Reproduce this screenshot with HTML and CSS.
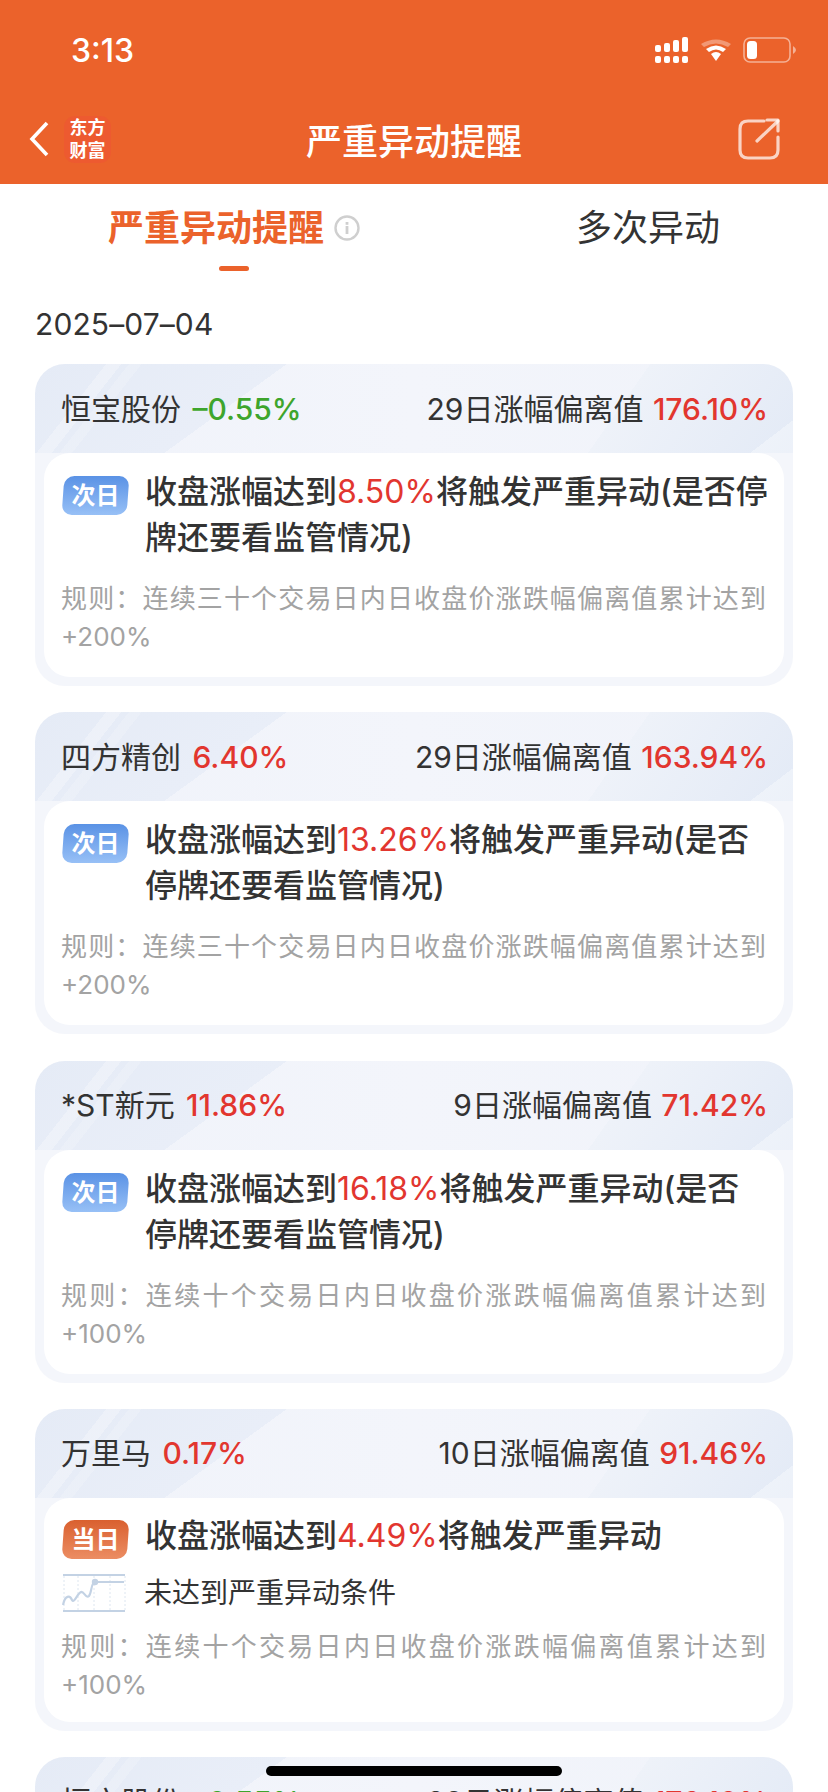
FILE: index.html
```html
<!DOCTYPE html>
<html>
<head>
	<meta charset="utf-8">
	<title>严重异动提醒</title>

	<link rel="stylesheet" href="styles.css">

</head>
<body>

	<header class="top">
		<div class="status">
			<span class="time">3:13</span>
			<div class="status-icons">
				<svg class="signal" width="34" height="26" viewBox="0 0 34 26" fill="#fff">
					<rect x="0" y="8" width="6" height="7" rx="2"/>
					<rect x="9" y="6" width="6" height="9" rx="2"/>
					<rect x="18" y="3" width="6" height="12" rx="2"/>
					<rect x="27" y="0" width="6" height="15" rx="2"/>
					<rect x="0" y="19" width="6" height="7" rx="2"/>
					<rect x="9" y="19" width="6" height="7" rx="2"/>
					<rect x="18" y="19" width="6" height="7" rx="2"/>
					<rect x="27" y="19" width="6" height="7" rx="2"/>
				</svg>
				<svg class="wifi" width="32" height="24" viewBox="0 0 32 24">
					<path d="M1 6 Q16 -3 31 6 L28 9 Q16 2 4 9 Z" fill="#fff" opacity="0.35"/>
					<path d="M6 11 Q16 4 26 11 L23 14 Q16 9 9 14 Z" fill="#fff"/>
					<path d="M11 16 Q16 12 21 16 L16 23 Z" fill="#fff"/>
				</svg>
				<svg class="battery" width="54" height="26" viewBox="0 0 54 26">
					<rect x="1" y="1" width="46" height="24" rx="6" fill="none" stroke="#fff" stroke-opacity="0.5" stroke-width="1.6"/>
					<rect x="4" y="4" width="10" height="18" rx="3.5" fill="#fff"/>
					<path d="M50 9 Q53 11 53 13 Q53 15 50 17 Z" fill="#fff" fill-opacity="0.5"/>
				</svg>
			</div>
		</div>
		<div class="nav">
			<div class="nav-left">
				<svg width="20" height="36" viewBox="0 0 20 36">
					<path d="M18 2 L3 18 L18 34" fill="none" stroke="#fff" stroke-width="3.6"/>
				</svg>
				<div class="logo">东方<br>财富</div>
			</div>
			<div class="nav-title">严重异动提醒</div>
			<svg class="share" width="42" height="42" viewBox="0 0 42 42" fill="none" stroke="#fff" stroke-opacity="0.72" stroke-width="3.2" stroke-linecap="round" stroke-linejoin="round">
				<path d="M26 3 H10 Q2 3 2 11 V32 Q2 40 10 40 H32 Q40 40 40 32 V19"/>
				<path d="M19 23 L40 3"/>
				<path d="M29 2 H40 V13"/>
			</svg>
		</div>
	</header>

	<nav class="tabs">
		<div class="tab tab-active">
			<span>严重异动提醒</span>
			<svg width="26" height="26" viewBox="0 0 26 26">
				<circle cx="13" cy="13" r="11.5" fill="none" stroke="#cfcfcf" stroke-width="2.4"/>
				<rect x="11.6" y="11" width="2.8" height="8" fill="#cfcfcf"/>
				<rect x="11.6" y="7" width="2.8" height="2.8" fill="#cfcfcf"/>
			</svg>
		</div>
		<div class="tab">多次异动</div>
	</nav>

	<div class="date">2025–07–04</div>

	<section class="card">
		<div class="card-head">
			<div><span class="name">恒宝股份</span> <span class="down">–0.55%</span></div>
			<div>29日涨幅偏离值 <span class="up">176.10%</span></div>
		</div>
		<div class="card-body">
			<div class="main">
				<span class="badge badge-next">次日</span>
				<p>收盘涨幅达到<em>8.50%</em>将触发严重异动(是否停牌还要看监管情况)</p>
			</div>
			<p class="rule">规则：连续三十个交易日内日收盘价涨跌幅偏离值累计达到+200%</p>
		</div>
	</section>

	<section class="card">
		<div class="card-head">
			<div><span class="name">四方精创</span> <span class="up">6.40%</span></div>
			<div>29日涨幅偏离值 <span class="up">163.94%</span></div>
		</div>
		<div class="card-body">
			<div class="main">
				<span class="badge badge-next">次日</span>
				<p>收盘涨幅达到<em>13.26%</em>将触发严重异动(是否停牌还要看监管情况)</p>
			</div>
			<p class="rule">规则：连续三十个交易日内日收盘价涨跌幅偏离值累计达到+200%</p>
		</div>
	</section>

	<section class="card">
		<div class="card-head">
			<div><span class="name">*ST新元</span> <span class="up">11.86%</span></div>
			<div>9日涨幅偏离值 <span class="up">71.42%</span></div>
		</div>
		<div class="card-body">
			<div class="main">
				<span class="badge badge-next">次日</span>
				<p>收盘涨幅达到<em>16.18%</em>将触发严重异动(是否停牌还要看监管情况)</p>
			</div>
			<p class="rule">规则：连续十个交易日内日收盘价涨跌幅偏离值累计达到+100%</p>
		</div>
	</section>

	<section class="card">
		<div class="card-head">
			<div><span class="name">万里马</span> <span class="up">0.17%</span></div>
			<div>10日涨幅偏离值 <span class="up">91.46%</span></div>
		</div>
		<div class="card-body card-body-today">
			<div class="main">
				<span class="badge badge-today">当日</span>
				<p>收盘涨幅达到<em>4.49%</em>将触发严重异动</p>
			</div>
			<div class="cond">
				<svg width="64" height="40" viewBox="0 0 64 40" fill="none">
					<path d="M1 2 H63 M1 38 H63" stroke="#c3d2e4" stroke-width="2.2"/>
					<path d="M16 3 V37 M32 3 V37 M48 3 V37 M63 3 V37 M2 3 V37" stroke="#dde6f0" stroke-width="1" stroke-dasharray="2 2"/>
					<path d="M1 32 C3 22 8 22 10 27 C12 31 15 21 19 19 C22 18 24 26 27 23 C30 19 29 9 33 9 H62" stroke="#c3d2e4" stroke-width="2.2"/>
					<circle cx="33" cy="9" r="3.2" fill="#c3d2e4"/>
				</svg>
				<p>未达到严重异动条件</p>
			</div>
			<p class="rule">规则：连续十个交易日内日收盘价涨跌幅偏离值累计达到+100%</p>
		</div>
	</section>

	<section class="card">
		<div class="card-head">
			<div><span class="name">恒宝股份</span> <span class="down">–0.55%</span></div>
			<div>29日涨幅偏离值 <span class="up">176.10%</span></div>
		</div>
	</section>

	<div class="home-bar"></div>

</body>
</html>
```

FILE: styles.css
```css
html, body {
	margin: 0;
	padding: 0;
}

body {
	position: relative;
	width: 828px;
	height: 1792px;
	overflow: hidden;
	background: #fff;
	color: #333;
	font-family: Inter, "Noto Sans CJK SC", sans-serif;
}

p {
	margin: 0;
}

.top {
	height: 184px;
	background: #eb622b;
	color: #fff;
}

.status {
	display: flex;
	justify-content: space-between;
	align-items: center;
	height: 100px;
	padding: 0 31px 0 71px;
}

.time {
	font-size: 32px;
	font-weight: 500;
}

.status-icons {
	display: flex;
	align-items: center;
	gap: 11px;
}

.nav {
	display: grid;
	grid-template-columns: 1fr auto 1fr;
	align-items: center;
	height: 84px;
	padding: 0 29px 6px;
	box-sizing: border-box;
}

.nav-left {
	display: flex;
	align-items: center;
	gap: 15px;
}

.share {
	justify-self: end;
	margin-right: 19px;
}

.logo {
	width: 47px;
	height: 47px;
	border-radius: 11px;
	background: #ed5a30;
	font-size: 18px;
	font-weight: 700;
	line-height: 23px;
	text-align: center;
}

.nav-title {
	font-size: 36px;
	font-weight: 500;
}

.tabs {
	display: grid;
	grid-template-columns: 414px 414px;
	padding: 24px 0 0 27px;
	height: 72px;
	font-size: 36px;
	line-height: 40px;
}

.tab {
	display: flex;
	justify-content: center;
	align-items: center;
	gap: 10px;
	height: 40px;
}

.tab-active {
	position: relative;
	color: #eb622b;
	font-weight: 700;
}

.tab-active::after {
	content: "";
	position: absolute;
	left: 192px;
	top: 58px;
	width: 30px;
	height: 5px;
	border-radius: 3px;
	background: #eb622b;
}

.date {
	padding-left: 35px;
	margin-top: 24px;
	margin-bottom: 20px;
	font-size: 30px;
	letter-spacing: 0.1px;
	line-height: 40px;
}

/* the header band has a faded pattern: darker corners and a few light streaks */
.card {
	width: 758px;
	height: 322px;
	margin: 0 0 26.33px 35px;
	padding: 0 9px 9px;
	box-sizing: border-box;
	border-radius: 30px;
	background:
		linear-gradient(128deg, transparent 56px, rgba(255,255,255,0.28) 56px 68px, transparent 68px 74px, rgba(255,255,255,0.16) 74px 84px, transparent 84px) 0 0 / 100% 89px no-repeat,
		linear-gradient(142.5deg, transparent 506px, rgba(255,255,255,0.35) 506px) 0 0 / 100% 89px no-repeat,
		linear-gradient(144deg, #e5ebf6 0, #e9eef8 148px, transparent 148px) 0 0 / 100% 89px no-repeat,
		linear-gradient(125deg, transparent 504px, #eef2f9 504px, #e3eaf6 100%) 0 0 / 100% 89px no-repeat,
		linear-gradient(90deg, #f0f3fa 0, #f3f5fb 50%, #f0f3fa 100%) 0 0 / 100% 89px no-repeat,
		#f4f6fb;
}

.card-head {
	display: flex;
	justify-content: space-between;
	align-items: center;
	height: 89px;
	padding: 0 16px 4px 17px;
	box-sizing: border-box;
	font-size: 30px;
}

.name {
	margin-right: 2px;
}

.up {
	color: #e2362f;
	margin-left: 1px;
	font-weight: 500;
}

.down {
	color: #3ea52c;
	margin-left: 1px;
	font-weight: 500;
}

.card-body {
	height: 224px;
	padding: 16px 16px 0 18px;
	box-sizing: border-box;
	border-radius: 26px;
	background: #fff;
}

.main {
	display: flex;
	align-items: flex-start;
	gap: 16px;
	font-size: 32px;
	font-weight: 500;
	line-height: 46px;
}

.main p {
	flex: 1;
	word-break: break-all;
}

.main em {
	font-style: normal;
	font-weight: 400;
	color: #e2362f;
}

.badge {
	position: relative;
	isolation: isolate;
	flex: none;
	width: 67px;
	height: 39px;
	margin-top: 7px;
	color: #fff;
	font-size: 24px;
	font-weight: 700;
	line-height: 39px;
	text-align: center;
}

.badge::before {
	content: "";
	position: absolute;
	z-index: -1;
	left: 1px;
	right: 1px;
	top: 0;
	bottom: 0;
	border-radius: 10px;
	transform: skewX(-4deg);
}

.badge-next::before {
	background: linear-gradient(#5a92e5, #97c0f6);
}

.badge-today::before {
	background: linear-gradient(#d9602f, #ec8d63);
}

.rule {
	margin-top: 19px;
	margin-right: 2px;
	margin-left: -1px;
	color: #a3a3a3;
	font-size: 26px;
	line-height: 38px;
	text-align: justify;
}

.card-body-today {
	padding-top: 15px;
}

.cond {
	display: flex;
	align-items: center;
	gap: 18px;
	margin-top: 14px;
	font-size: 28px;
	line-height: 40px;
}

.card-body-today .rule {
	margin-top: 15px;
}

.home-bar {
	position: absolute;
	left: 266px;
	top: 1766px;
	width: 296px;
	height: 10px;
	border-radius: 5px;
	background: #000;
}
```
